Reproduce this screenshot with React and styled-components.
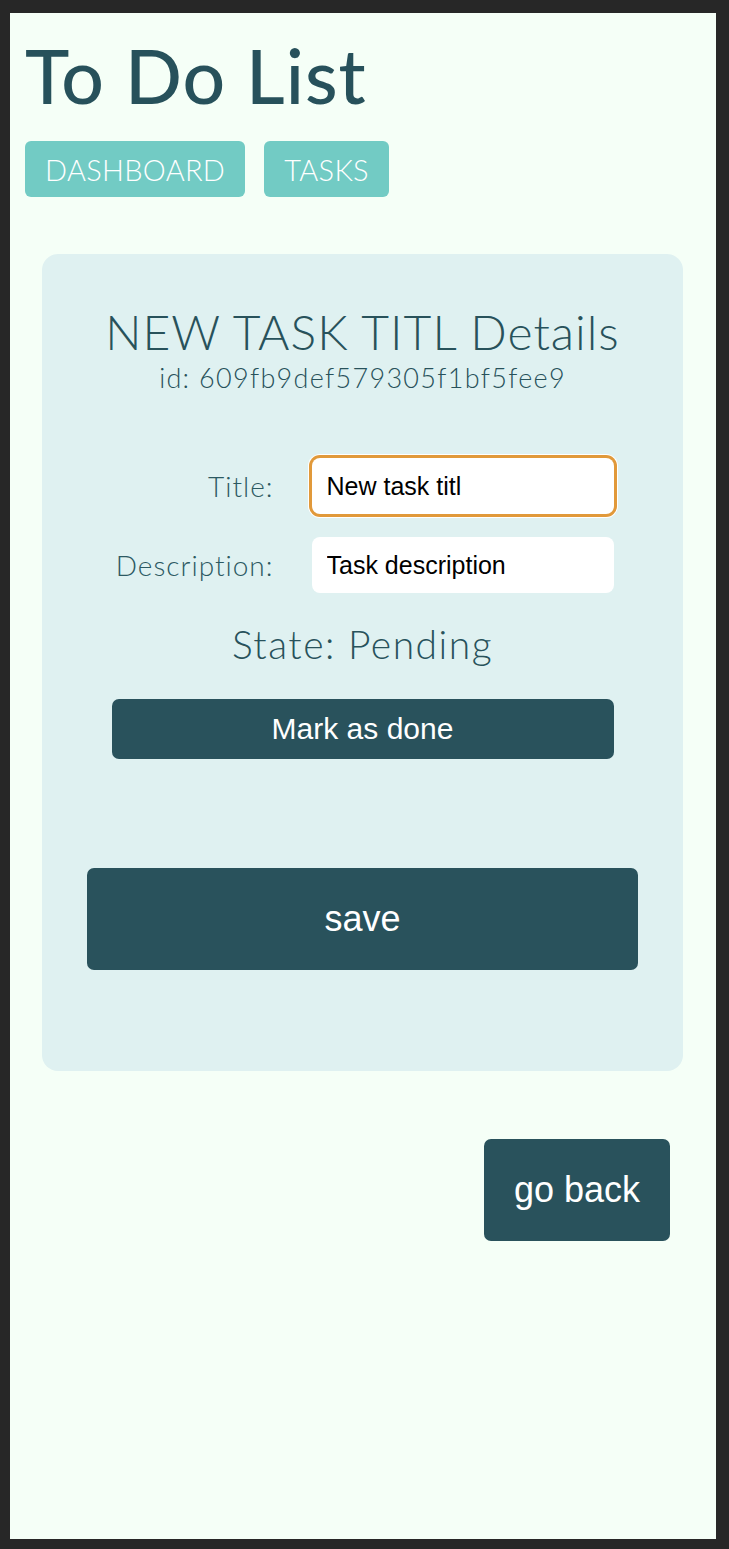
import styled, { createGlobalStyle } from "styled-components";

const GlobalStyle = createGlobalStyle`
  html, body {
    margin: 0;
    padding: 0;
    background: #272727;
  }
  body {
    font-family: Lato, "Open Sans", sans-serif;
  }
`;

const Frame = styled.div`
  margin: 13px 13px 10px 10px;
  height: 1526px;
  background: #f5fff7;
  color: #28525b;
  overflow: hidden;
`;

const Header = styled.header`
  padding: 0 15px;
`;

const AppTitle = styled.h1`
  margin: 19px 0 0;
  font-size: 75px;
  font-weight: 500;
  line-height: 87px;
  letter-spacing: 1px;
  color: #27515b;
`;

const Nav = styled.nav`
  display: flex;
  gap: 19px;
  margin-top: 22px;
`;

const NavLink = styled.a`
  display: flex;
  align-items: center;
  height: 56px;
  padding: 0 20px;
  border-radius: 6px;
  background: #72cbc4;
  color: #fff;
  font-size: 29px;
  font-weight: 300;
  letter-spacing: 0.3px;
  text-decoration: none;
`;

const Card = styled.section`
  margin: 57px 33px 0 32px;
  height: 817px;
  box-sizing: border-box;
  padding-top: 50px;
  border-radius: 16px;
  background: #dff1f1;
  display: flex;
  flex-direction: column;
  align-items: center;
`;

const Heading = styled.h2`
  margin: 0;
  font-size: 48px;
  font-weight: 300;
  line-height: 56px;
  letter-spacing: 1px;
`;

const TaskId = styled.div`
  margin-top: 2px;
  font-size: 27px;
  font-weight: 300;
  line-height: 32px;
  letter-spacing: 1.3px;
`;

const Form = styled.div`
  margin-top: 64px;
  display: grid;
  grid-template-columns: 162px 302px;
  column-gap: 38px;
  row-gap: 23px;
  align-items: center;
`;

const Label = styled.label`
  justify-self: end;
  font-size: 28px;
  font-weight: 300;
  letter-spacing: 1px;
  color: #2c5962;
`;

const Input = styled.input`
  height: 56px;
  box-sizing: border-box;
  padding: 0 15px;
  border: none;
  border-radius: 8px;
  background: #fff;
  font-family: "Liberation Sans", Arial, sans-serif;
  font-size: 25px;
  color: #000;
  outline: none;
  box-shadow: ${(p) =>
    p.$focused ? "0 0 0 3px #e1993a, 0 0 0 4px #fff" : "none"};
`;

const State = styled.div`
  margin-top: 26px;
  font-size: 39px;
  font-weight: 300;
  line-height: 50px;
  letter-spacing: 1.5px;
`;

const Button = styled.button`
  border: none;
  border-radius: 7px;
  background: #29525c;
  color: #fff;
  font-family: "Liberation Sans", Arial, sans-serif;
  font-size: ${(p) => p.$size || "36px"};
  width: ${(p) => p.$width};
  height: ${(p) => p.$height};
  margin-top: ${(p) => p.$top || "0"};
  cursor: pointer;
`;

const Footer = styled.div`
  display: flex;
  justify-content: flex-end;
  padding: 68px 46px 0 0;
`;

export default function App() {
  return (
    <>
      <GlobalStyle />
      <Frame>
        <Header>
          <AppTitle>To Do List</AppTitle>
          <Nav>
            <NavLink href="#">DASHBOARD</NavLink>
            <NavLink href="#">TASKS</NavLink>
          </Nav>
        </Header>
        <Card>
          <Heading>NEW TASK TITL Details</Heading>
          <TaskId>id: 609fb9def579305f1bf5fee9</TaskId>
          <Form>
            <Label>Title:</Label>
            <Input $focused defaultValue="New task titl" />
            <Label>Description:</Label>
            <Input defaultValue="Task description" />
          </Form>
          <State>State: Pending</State>
          <Button $width="502px" $height="60px" $size="30px" $top="30px">
            Mark as done
          </Button>
          <Button $width="551px" $height="102px" $top="109px">
            save
          </Button>
        </Card>
        <Footer>
          <Button $width="186px" $height="102px">
            go back
          </Button>
        </Footer>
      </Frame>
    </>
  );
}
